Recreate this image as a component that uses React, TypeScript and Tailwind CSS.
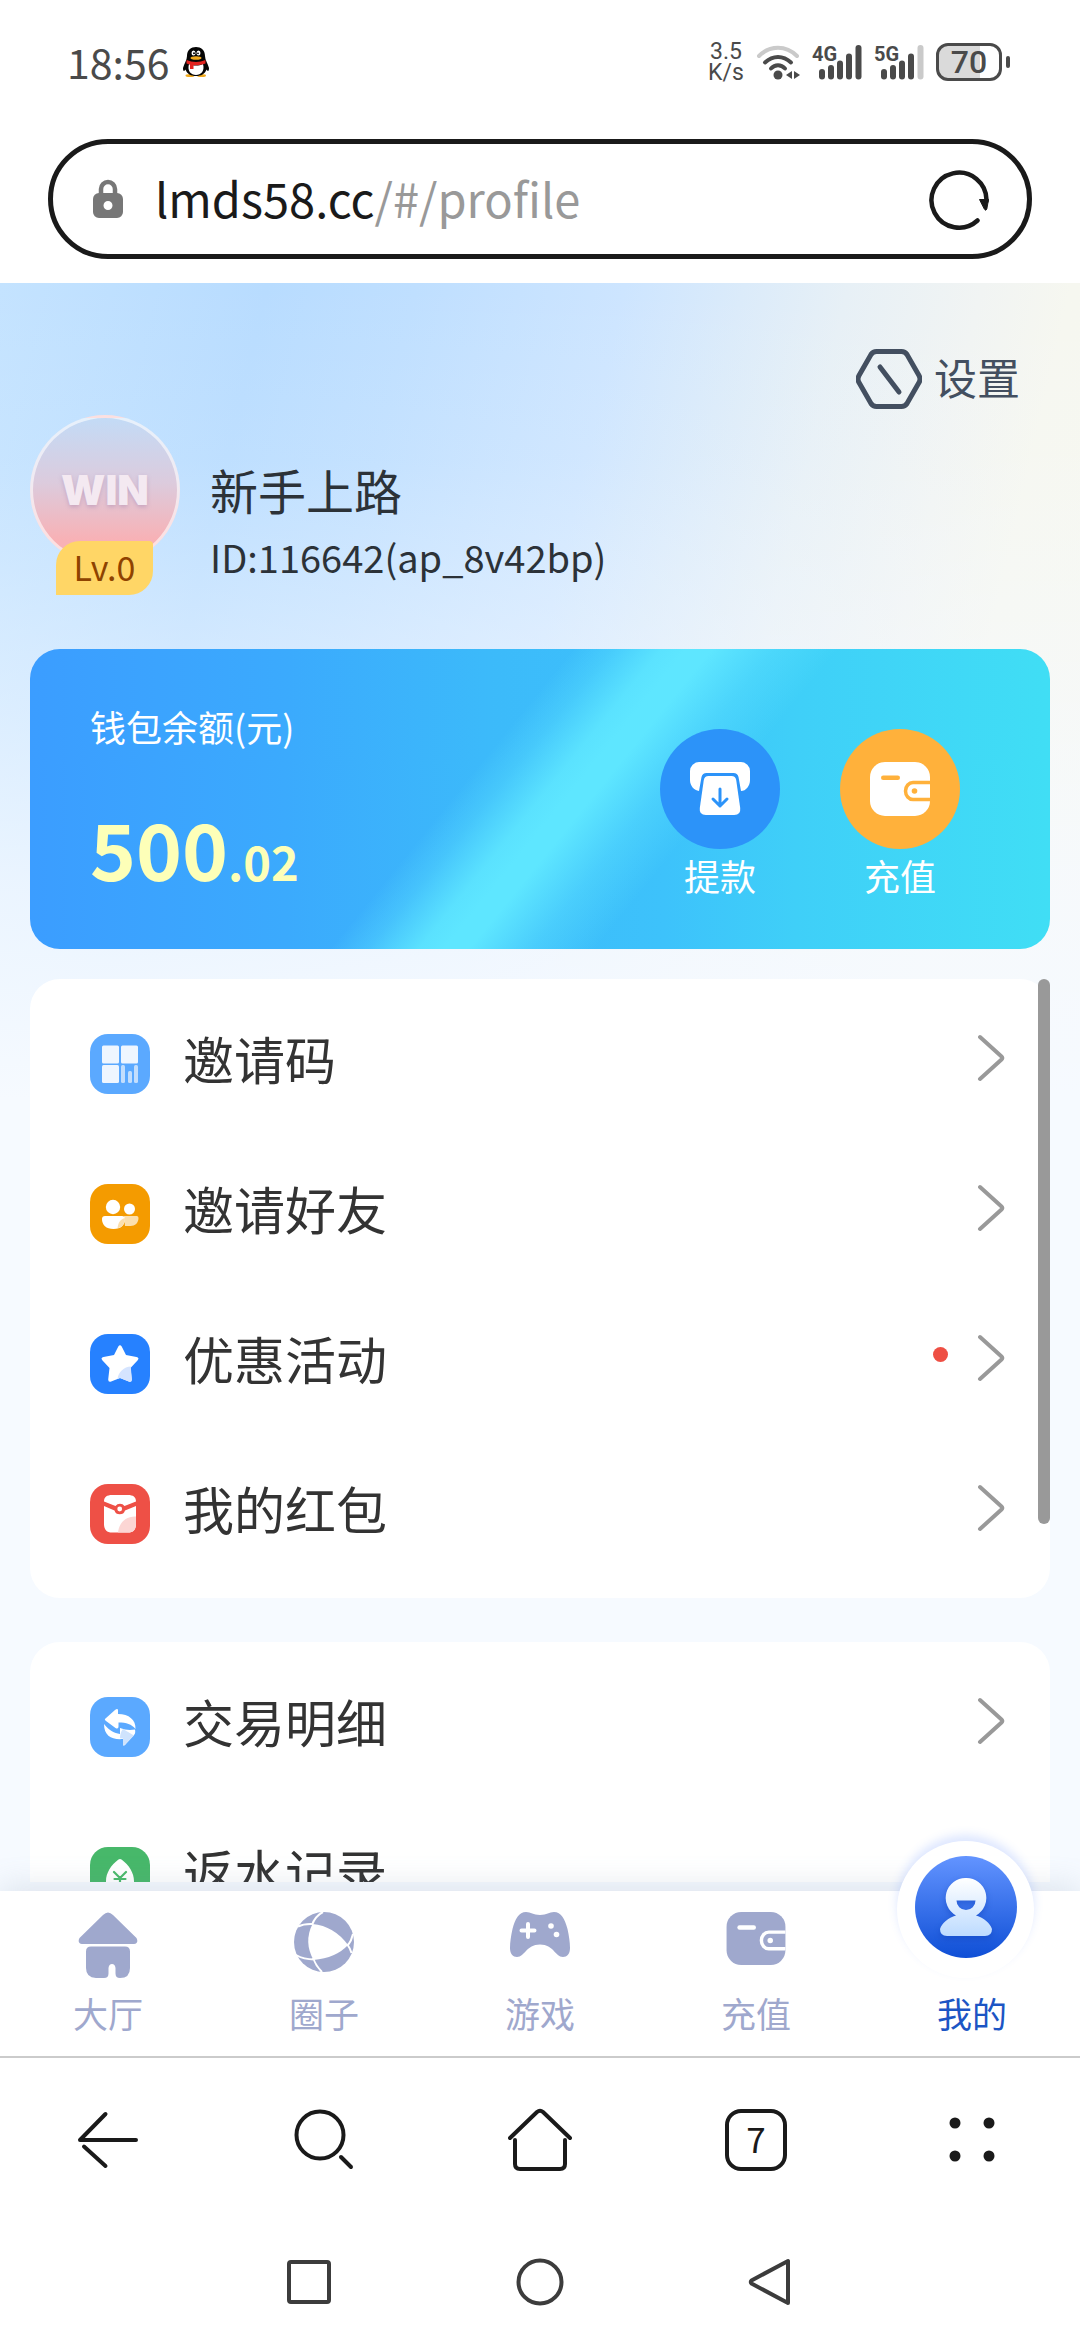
import type { ReactNode } from "react";

const page =
  "bg-[linear-gradient(to_bottom,rgba(246,250,255,0)_0%,rgba(246,250,255,0.1)_10%,rgba(246,250,255,0.45)_22%,rgba(246,250,255,0.8)_34%,#f6faff_46%),linear-gradient(103deg,#c4e3ff_0%,#b8dcff_18%,#bfdfff_28%,#cde5ff_42%,#dbebfa_50%,#e7f0f6_57%,#f1f4f3_66%,#f6f7f0_72%,#f8f8ef_100%)]";

/* ---------- status bar ---------- */

function Penguin() {
  return (
    <svg width="26" height="30" viewBox="0 0 26 30" aria-hidden="true">
      <ellipse cx="7" cy="28.5" rx="4.5" ry="1.5" fill="#f0a91c" />
      <ellipse cx="18.500" cy="28.500" rx="4.500" ry="1.500" fill="#f0a91c" />
      <path d="M4 9C4 3 8 0 13 0s9 3 9 9c0 4 3 8 4 12 0 3-1 4-2.500 1.500C22 27 18 29 13 29S4 27 2.500 22.500C1 25 0 24 0 21c1-4 4-8 4-12Z" fill="#050505" />
      <path d="M6 17c4 2 10 2 14 0 2 7-2 11-7 11S4 24 6 17Z" fill="#fff" />
      <ellipse cx="10.500" cy="6" rx="2" ry="2.600" fill="#fff" />
      <ellipse cx="15.500" cy="6" rx="2" ry="2.600" fill="#fff" />
      <circle cx="11" cy="6.300" r="1" fill="#000" />
      <circle cx="15" cy="6.300" r="0.900" fill="#000" />
      <ellipse cx="13" cy="11" rx="5.500" ry="1.800" fill="#f0a91c" />
      <path d="M3.500 13c6 2.500 13 2.500 19 0v3.500c-4 1.500-8 2-12 1.700V22H7v-4.500l-3.500-1Z" fill="#e2231f" />
    </svg>
  );
}

function Wifi() {
  return (
    <svg width="44" height="36" viewBox="0 0 44 36" fill="none" aria-hidden="true">
      <g strokeLinecap="round" strokeWidth="4">
        <path d="M3 12c11-11 27-11 38 0" stroke="#cacaca" />
        <path d="M9 18.500c8-7.500 18-7.500 26 0" stroke="#4a4a4a" />
        <path d="M15 24.500c4-4.500 10-4.500 14 0" stroke="#4a4a4a" />
      </g>
      <circle cx="22" cy="31" r="4.500" fill="#4a4a4a" />
      <path d="M36 27v8l-6-4ZM38 27v8l6-4Z" fill="#4a4a4a" />
    </svg>
  );
}

function Signal({ label, dim }: { label: string; dim?: boolean }) {
  return (
    <div className="relative h-9 w-[50px] font-['Roboto'] text-[#4a4a4a]">
      <span className="absolute top-0 left-0 text-[20px] leading-[20px] font-bold">{label}</span>
      <svg className="absolute right-0 bottom-0" width="43" height="35" viewBox="0 0 43 35" aria-hidden="true">
        <g fill="#4a4a4a">
          <rect x="0" y="24" width="6" height="10.500" rx="3" />
          <rect x="9" y="20" width="6" height="14.500" rx="3" />
          <rect x="18" y="15.500" width="6" height="19" rx="3" />
          <rect x="27" y="8.500" width="6" height="26" rx="3" />
          <rect x="36.500" y="0" width="6" height="34.500" rx="3" fill={dim ? "#cacaca" : "#4a4a4a"} />
        </g>
      </svg>
    </div>
  );
}

function StatusBar() {
  return (
    <div className="flex h-[124px] items-center justify-between pr-[70px] pl-[67px] text-[#4a4a4a]">
      <div className="flex items-center gap-[14px]">
        <span className="pb-0.5 font-['Noto_Sans_CJK_SC',sans-serif] text-[41px] leading-[48px]">18:56</span>
        <Penguin />
      </div>
      <div className="flex items-center gap-3">
        <div className="w-9 text-center font-['Roboto'] text-[23px] leading-[21px]">
          3.5 K/s
        </div>
        <Wifi />
        <Signal label="4G" />
        <Signal label="5G" dim />
        <div className="flex items-center gap-1">
          <div className="flex h-[38px] w-[66px] items-center justify-center rounded-xl border-[3px] border-[#4a4a4a] bg-[linear-gradient(to_right,#dadada_68%,transparent_68%)] font-['Roboto'] text-[32px] leading-[32px] font-medium">
            70
          </div>
          <div className="h-3 w-1 rounded-sm bg-[#4a4a4a]" />
        </div>
      </div>
    </div>
  );
}

function AddressBar() {
  return (
    <div className="mx-12 mt-[15px] mb-6 flex h-[120px] items-center justify-between rounded-full border-[5px] border-[#1a1a1a] bg-white pr-9 pl-10">
      <div className="flex items-center gap-8">
        <svg width="30" height="40" viewBox="0 0 30 40" aria-hidden="true">
          <path d="M8 17V10a7 7 0 0 1 14 0v7" fill="none" stroke="#777" strokeWidth="4.500" />
          <path fillRule="evenodd" d="M6 14h18a6 6 0 0 1 6 6v13a6 6 0 0 1-6 6H6a6 6 0 0 1-6-6V20a6 6 0 0 1 6-6Zm9 8a4.500 4.500 0 1 0 0 9 4.500 4.500 0 0 0 0-9Z" fill="#777" />
        </svg>
        <a href="#/profile" className="pb-0.5 font-['Noto_Sans_CJK_SC',sans-serif] text-[47px] leading-[60px] text-[#1a1a1a]">
          lmds58.cc<span className="text-[#999]">/#/profile</span>
        </a>
      </div>
      <button type="button" aria-label="刷新">
        <svg width="62" height="62" viewBox="0 0 62 62" fill="none" aria-hidden="true">
          <path d="M48.500 52.500A27.500 27.500 0 1 1 57.500 33" stroke="#1a1a1a" strokeWidth="4.500" strokeLinecap="round" />
          <path d="M50.500 31.500h9L57.800 41q-1 2.500-2.500 0Z" fill="#1a1a1a" stroke="#1a1a1a" strokeLinejoin="round" />
        </svg>
      </button>
    </div>
  );
}

/* ---------- profile ---------- */

function Profile() {
  return (
    <section className="flex gap-[30px]">
      <div className="relative h-[180px] w-[150px] shrink-0">
        <div className="flex size-[150px] items-center justify-center rounded-full border-[3px] border-white/60 bg-[linear-gradient(to_bottom,#c3dbf6_0%,#dccbdd_45%,#f8b1b5_85%)] font-['Inter'] text-[41px] leading-[40px] font-black text-[#f4e9f1] [text-shadow:0_2px_4px_rgba(150,120,170,0.4)]">
          WIN
        </div>
        <div className="absolute bottom-0 left-[26px] flex h-[54px] w-[97px] items-center justify-center rounded-tl-[24px] rounded-tr-[4px] rounded-br-[24px] bg-[#ffd666] pb-0.5 text-[34px] leading-[40px] text-[#8f4300]">
          Lv.0
        </div>
      </div>
      <div className="flex flex-col gap-[14px] pt-11 text-[#2c3238]">
        <h1 className="text-[48px] leading-[60px]">新手上路</h1>
        <p className="text-[38px] leading-[48px]">ID:116642(ap_8v42bp)</p>
      </div>
    </section>
  );
}

function WalletGlyph({ width, height, ink, cut }: { width: number; height: number; ink: string; cut: string }) {
  return (
    <svg width={width} height={height} viewBox="0 0 60 54" aria-hidden="true">
      <rect width="60" height="54" rx="15" fill={ink} />
      <path d="M60 20.500H43a7.500 8.500 0 0 0 0 17h17" fill="none" stroke={cut} strokeWidth="3.500" />
      <rect x="11" y="13.500" width="19" height="4.500" rx="2.250" fill={cut} />
      <circle cx="44.500" cy="29" r="2.800" fill={cut} />
    </svg>
  );
}

function Wallet() {
  return (
    <section className="mt-[54px] flex h-[300px] justify-between rounded-[30px] bg-[linear-gradient(129deg,rgba(94,230,255,0)_43%,rgba(94,230,255,0.3)_46%,rgba(94,230,255,0.9)_50%,#5ee6ff_52%,#5ee6ff_54%,rgba(94,230,255,0.4)_59%,rgba(94,230,255,0)_64%),linear-gradient(to_right,#3b9dff_0%,#3baafd_25%,#3cbafa_45%,#3dc2fb_62%,#3fcff8_75%,#40def5_100%)] pr-[90px] pl-[60px] text-white">
      <div className="flex flex-col pt-[57px]">
        <h2 className="text-[36px] leading-[40px]">钱包余额(元)</h2>
        <p className="mt-[56px] leading-[90px] font-bold text-[#fdffb8]">
          <span className="text-[78px]">500</span>
          <span className="text-[47px]">.02</span>
        </p>
      </div>
      <div className="flex gap-[60px] pt-20">
        <button type="button" className="flex flex-col items-center gap-0.5">
          <span className="flex size-[120px] items-center justify-center rounded-full bg-[#2c93f9]">
            <svg width="60" height="54" viewBox="0 0 60 54" fill="none" aria-hidden="true">
              <path d="M9 0h42a9 9 0 0 1 9 9v9c0 6-4 11-9 11l-2.500-14q-1-4-5-4h-27q-4 0-5 4L9 29C4 28 0 24 0 18V9a9 9 0 0 1 9-9Z" fill="#fff" />
              <path d="M18.500 14h23q4 0 4.700 4l4 28q.8 7-6 7H15.800q-6.800 0-6-7l4-28q.700-4 4.700-4Z" fill="#fff" />
              <path d="M30 27v17m-7-7 7 7 7-7" stroke="#2c93f9" strokeWidth="3" strokeLinecap="round" strokeLinejoin="round" />
            </svg>
          </span>
          <span className="text-[36px] leading-[48px]">提款</span>
        </button>
        <button type="button" className="flex flex-col items-center gap-0.5">
          <span className="flex size-[120px] items-center justify-center rounded-full bg-[#ffb13b]">
            <WalletGlyph width={60} height={54} ink="#fff" cut="#ffb13b" />
          </span>
          <span className="text-[36px] leading-[48px]">充值</span>
        </button>
      </div>
    </section>
  );
}

/* ---------- menu ---------- */

const glyphs: Record<string, ReactNode> = {
  code: (
    <>
      <g fill="#eff6ff">
        <rect x="12" y="11.500" width="17" height="18" rx="1.500" />
        <rect x="31" y="11.500" width="17" height="18" rx="1.500" />
        <rect x="12" y="31" width="17" height="18" rx="1.500" />
      </g>
      <g fill="#c3defd">
        <rect x="31" y="31" width="4" height="18" rx="1.500" />
        <rect x="38" y="37" width="4" height="12" rx="1.500" />
        <rect x="44" y="31" width="4" height="18" rx="1.500" />
      </g>
    </>
  ),
  friends: (
    <>
      <circle cx="23" cy="23" r="7.200" fill="#fff" />
      <circle cx="39.500" cy="25" r="5.500" fill="#fff" />
      <path d="M34 32h13a2 2 0 0 1 1.500 2c0 5-3.500 8-8 8H35Z" fill="#fbdfae" />
      <path d="M15 32h17a3 3 0 0 1 3 3c0 6-4 10-11.500 10S12 41 12 35a3 3 0 0 1 3-3Z" fill="#fff" />
      <path d="M35 34c-4 1-7 4-7.500 10.500C32 43 35 40 35 34Z" fill="#fbdfae" />
    </>
  ),
  star: (
    <>
      <path d="M28.300 12.500q1.700-2.500 3.400 0l4.300 8.500 10.500 2q3.200.8 1.200 3.200L40.500 34l1.300 11.500q0 3-3 2L30 44l-8.800 3.500q-3 1-3-2L19.500 34l-7.200-7.800q-2-2.400 1.200-3.200l10.500-2Z" fill="#fff" />
      <path d="M40.800 32.500C34 33 28.500 37.500 27.500 45l2.500-1 8.800 3.500q3 1 3-2Z" fill="#d5e4ff" />
    </>
  ),
  packet: (
    <>
      <path d="M22 11h16c5 0 8 2 8 6.500L34.500 22a5.500 5.500 0 0 0-9 0L14 17.500C14 13 17 11 22 11Z" fill="#fff" />
      <path d="M14 22l10.500 4.500a5.500 5.500 0 0 0 10.500 0L46 22v18c0 6-3 8.500-8 8.500H22c-5 0-8-2.500-8-8.500Z" fill="#fff" />
      <circle cx="29.700" cy="25" r="2.400" fill="#fff" />
      <path d="M46 32.500c-10-.5-17 6-18 16h10c5 0 8-2.500 8-8.500Z" fill="#fcd6d4" />
    </>
  ),
  exchange: (
    <>
      <path d="M30 39v-8c5 2 10 2.500 15 1.500 0 0 1 4-1 5.500l-9 10q-2 2-2-1v-5C22 43 14 39 14 27c6 7 10 9 16 10Z" fill="#fff" />
      <path d="M33 32l11 6.500-9 9q-2 2-2-1v-5l-3-.3c0-4 1-7 3-9.200Z" fill="#cfe3fd" />
      <path d="M15.500 21.500l9.500-8.500q3-2 3 .5V17c11 0 18 6 17.500 15-4-5-9-6.500-17-6.500v4q0 3-3 1.500l-9.500-7q-2-1.500-.5-2.500Z" fill="#fff" />
    </>
  ),
  rebate: (
    <>
      <path d="M28.500 12.500q1.500-1.200 3 0C39 18 44 26 44 34c0 9-6 14-14 14s-14-5-14-14c0-8 5-16 12.500-21.500Z" fill="#fff" />
      <path d="m24 25 6 6 6-6M30 31v12M24.500 32h11M24.500 37h11" fill="none" stroke="#4aba6b" strokeWidth="2.200" strokeLinecap="round" />
    </>
  ),
};

type Item = { id: string; label: string; tile: string; dot?: boolean };

const groups: Item[][] = [
  [
    { id: "code", label: "邀请码", tile: "bg-[#5ba9ff]" },
    { id: "friends", label: "邀请好友", tile: "bg-[#f49b00]" },
    { id: "star", label: "优惠活动", tile: "bg-[#2681ff]", dot: true },
    { id: "packet", label: "我的红包", tile: "bg-[#ee5046]" },
  ],
  [
    { id: "exchange", label: "交易明细", tile: "bg-[#5ba9ff]" },
    { id: "rebate", label: "返水记录", tile: "bg-[#47b86a]" },
  ],
];

function MenuRow({ item }: { item: Item }) {
  return (
    <li>
      <button type="button" className="flex h-[150px] w-full items-center pr-[45px] pl-[60px]">
        <span className={`mt-1.5 mr-[33px] size-[60px] rounded-[18px] ${item.tile}`}>
          <svg width="60" height="60" viewBox="0 0 60 60" aria-hidden="true">
            {glyphs[item.id]}
          </svg>
        </span>
        <span className="pb-1.5 text-[51px] leading-[60px] text-[#333]">{item.label}</span>
        <span className="ml-auto flex items-center gap-[29px] pb-1.5">
          {item.dot && <span className="mb-2 size-[15px] rounded-full bg-[#ee4f44]" />}
          <svg width="28" height="48" viewBox="0 0 28 48" fill="none" aria-hidden="true">
            <path d="M3 3 24.500 22.500q1.500 1.500 0 3L3 45" stroke="#999" strokeWidth="4" strokeLinecap="round" />
          </svg>
        </span>
      </button>
    </li>
  );
}

/* ---------- bottom bars ---------- */

const tabTint = "#9fa8cd";

const tabs: { label: string; icon: ReactNode }[] = [
  {
    label: "大厅",
    icon: (
      <svg width="60" height="66" viewBox="0 0 60 66" fill={tabTint} aria-hidden="true">
        <path d="M25 3q5-5 10 0l23.500 23q2.500 5-2.500 6H4q-5-1-2.500-6Z" />
        <path d="M13 34.500h34q5 0 5 5V56q0 10-10 10-4.500 0-4.500-4.500V56q-.5-4-3.500-4t-3.500 4v5.500q0 4.500-4.500 4.500h-8Q8 65.500 8 56V39.500q0-5 5-5Z" />
      </svg>
    ),
  },
  {
    label: "圈子",
    icon: (
      <svg width="60" height="60" viewBox="0 0 60 60" aria-hidden="true">
        <circle cx="30" cy="30" r="30" fill={tabTint} />
        <path d="M18.500 12Q40 14 54 33 42 46 19.500 48 9.500 30 18.500 12Z" fill="#fff" />
        <path d="M29 0Q21 4 18 13M4 14.500q6-3 15-2.500M53.500 34q4-5 5.500-12M53 32q3 4 4.500 9M19 46q3 8 9 14M2 43q8 4.500 18 4.500" fill="none" stroke="#fff" strokeWidth="2" />
      </svg>
    ),
  },
  {
    label: "游戏",
    icon: (
      <svg width="60" height="45" viewBox="0 0 60 45" aria-hidden="true">
        <path d="M16 0C21 0 23 3 30 3S39 0 44 0C51 0 55 7 57.500 17 59 24 60 30 60 36 60 42 57 45 53 45 45 45 44 32.500 30 32.500S15 45 7 45C3 45 0 42 0 36 0 30 1 24 2.500 17 5 7 9 0 16 0Z" fill={tabTint} />
        <path d="M18 12v13M11.500 18.500h13" stroke="#fff" strokeWidth="4" strokeLinecap="round" />
        <circle cx="41" cy="14" r="2.800" fill="#fff" />
        <circle cx="46.500" cy="22.500" r="2.800" fill="#fff" />
      </svg>
    ),
  },
  { label: "充值", icon: <WalletGlyph width={60} height={53} ink={tabTint} cut="#fff" /> },
];

function TabBar() {
  return (
    <nav className="relative z-10 mt-[9px] grid h-[165px] grid-cols-5 bg-white shadow-[0_-4px_30px_rgba(115,135,160,0.2)]">
      {tabs.map((tab) => (
        <button key={tab.label} type="button" className="flex flex-col items-center justify-between pt-[21px] pb-[19px]">
          {tab.icon}
          <span className="text-[35px] leading-[48px] text-[#9fa8cd]">{tab.label}</span>
        </button>
      ))}
      <button type="button" aria-current="page" className="relative flex flex-col items-center justify-end pb-[19px]">
        <span className="absolute -top-[50px] left-[33px] flex size-[137px] items-center justify-center rounded-full bg-white pb-1.5 shadow-[0_-6px_10px_rgba(70,120,255,0.18)]">
          <span className="flex size-[102px] items-center justify-center rounded-full bg-[linear-gradient(to_bottom,#6394ff,#0f4fd6)]">
            <svg className="drop-shadow-[0_3px_3px_rgba(10,60,180,0.4)]" width="52" height="58" viewBox="0 0 52 58" aria-hidden="true">
              <defs>
                <linearGradient id="person" x1="0" y1="0" x2="0" y2="1">
                  <stop offset="0" stopColor="#fff" />
                  <stop offset="1" stopColor="#bddbff" />
                </linearGradient>
              </defs>
              <path fillRule="evenodd" d="M26 0a20 20 0 0 1 10 37.500C44 40 50 45 52 51q0 7-7 7H7q-7 0-7-7c2-6 8-11 16-13.500A20 20 0 0 1 26 0Zm-9.500 22.500a9.500 9.500 0 0 0 19 0Z" fill="url(#person)" />
            </svg>
          </span>
        </span>
        <span className="relative text-[35px] leading-[48px] text-[#1c55c4]">我的</span>
      </button>
    </nav>
  );
}

const ink = { fill: "none", stroke: "#1a1a1a", strokeWidth: 4, strokeLinecap: "round", strokeLinejoin: "round" } as const;

function BrowserBar() {
  return (
    <nav className="relative z-10 grid h-[170px] grid-cols-5 items-center justify-items-center border-t-2 border-[#cbcbcb] bg-white pb-1">
      <button type="button" aria-label="后退">
        <svg width="64" height="64" viewBox="0 0 64 64" {...ink}>
          <path d="M60 32H4L29.500 6M8 38.500 29.500 58" />
        </svg>
      </button>
      <button type="button" aria-label="搜索">
        <svg width="64" height="64" viewBox="0 0 64 64" {...ink}>
          <circle cx="28" cy="27" r="23.500" />
          <path d="M49 49l10 10" />
        </svg>
      </button>
      <button type="button" aria-label="主页">
        <svg width="64" height="64" viewBox="0 0 64 64" {...ink}>
          <path d="M2 30 29 4q3-2.500 6 0l27 26M7 32v24q0 5 5 5h40q5 0 5-5V32" />
        </svg>
      </button>
      <button type="button" aria-label="标签页" className="flex size-[62px] items-center justify-center rounded-2xl border-4 border-[#1a1a1a] pb-1 text-[35px] leading-[40px] text-[#1a1a1a]">
        7
      </button>
      <button type="button" aria-label="菜单">
        <svg width="64" height="64" viewBox="0 0 64 64" fill="#1a1a1a">
          <circle cx="15" cy="15" r="5.500" />
          <circle cx="49" cy="15" r="5.500" />
          <circle cx="15" cy="48" r="5.500" />
          <circle cx="49" cy="48" r="5.500" />
        </svg>
      </button>
    </nav>
  );
}

function SystemBar() {
  return (
    <nav className="flex h-[114px] justify-center gap-[183px] bg-white pt-8">
      <button type="button" aria-label="最近任务" className="h-12">
        <svg width="48" height="48" viewBox="0 0 48 48" fill="none" stroke="#3c3c3c" strokeWidth="4">
          <rect x="4" y="4" width="40" height="40" rx="2" />
        </svg>
      </button>
      <button type="button" aria-label="主屏幕" className="h-12">
        <svg width="48" height="48" viewBox="0 0 48 48" fill="none" stroke="#3c3c3c" strokeWidth="4">
          <circle cx="24" cy="24" r="21.500" />
        </svg>
      </button>
      <button type="button" aria-label="返回" className="h-12">
        <svg width="48" height="48" viewBox="0 0 48 48" fill="none" stroke="#3c3c3c" strokeWidth="4" strokeLinejoin="round">
          <path d="M41 3v42L4.500 25.500q-1.500-1.500 0-3Z" />
        </svg>
      </button>
    </nav>
  );
}

export default function App() {
  return (
    <div className="flex h-screen flex-col bg-white font-['Noto_Sans_CJK_SC',sans-serif]">
      <header className="shrink-0">
        <StatusBar />
        <AddressBar />
      </header>

      <main className={`flex min-h-0 flex-1 flex-col ${page}`}>
        <div className="flex shrink-0 flex-col px-[30px] pt-16">
          <button type="button" className="mr-[30px] flex h-16 items-center gap-3 self-end text-[43px] leading-[60px] text-[#434f60]">
            <svg width="66" height="60" viewBox="0 0 66 60" fill="none" stroke="#434f60" strokeWidth="5" strokeLinecap="round" aria-hidden="true">
              <path d="M20.500 2.500h25q3.500 0 5.500 3l12 21q2 3.500 0 7l-12 21q-2 3-5.500 3h-25q-3.500 0-5.500-3L3 33.500q-2-3.500 0-7l12-21q2-3 5.500-3Z" />
              <path d="m24 18 19 25" />
            </svg>
            <span className="pb-1.5">设置</span>
          </button>
          <div className="mt-1">
            <Profile />
            <Wallet />
          </div>
        </div>

        <div className="relative mt-[30px] min-h-0 flex-1 overflow-hidden px-[30px]">
          <div className="flex flex-col gap-[44px]">
            {groups.map((group) => (
              <ul key={group[0].id} className="rounded-[30px] bg-white pt-[7px] pb-[12px]">
                {group.map((item) => (
                  <MenuRow key={item.id} item={item} />
                ))}
              </ul>
            ))}
          </div>
          <div className="absolute top-0 right-[30px] h-[545px] w-3 rounded-full bg-[#999]" />
        </div>
        <TabBar />
      </main>

      <footer className="shrink-0">
        <BrowserBar />
        <SystemBar />
      </footer>
    </div>
  );
}
